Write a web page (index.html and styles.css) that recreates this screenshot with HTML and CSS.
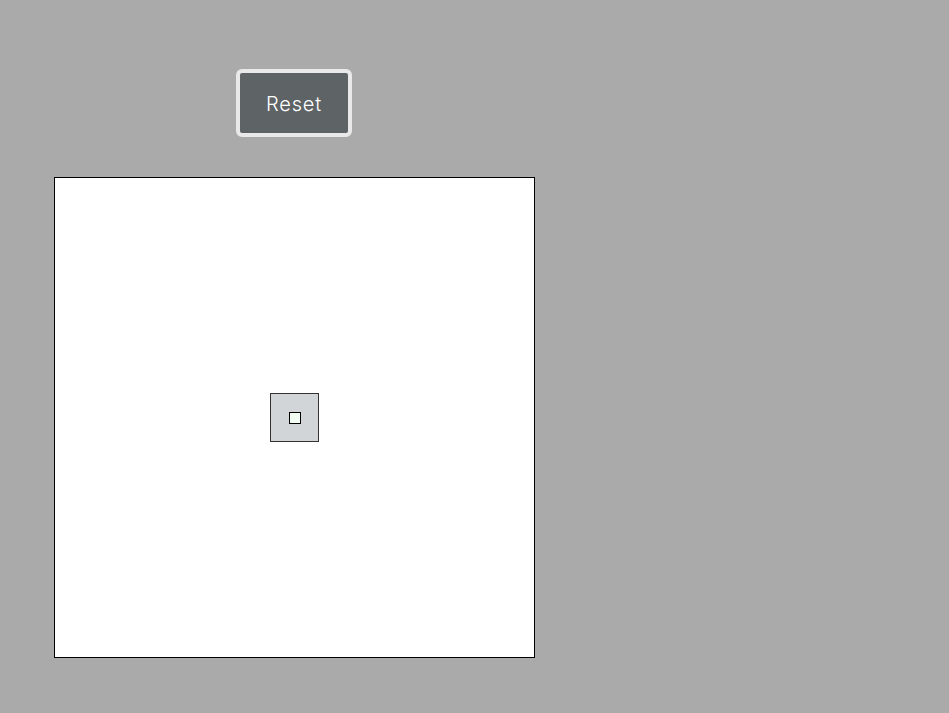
FILE: index.html
```html
<!DOCTYPE html>
<html>
<head>
<meta charset="utf-8">
<link rel="stylesheet" href="styles.css">
</head>
<body>
<div class="stage">
  <button class="reset">Reset</button>
  <div class="canvas">
    <div class="box"><div class="dot"></div></div>
  </div>
</div>
</body>
</html>
```
FILE: styles.css
```css
html, body { margin: 0; padding: 0; }
body {
  background: #aaaaaa;
  font-family: Inter, "Open Sans", sans-serif;
  width: 949px;
  height: 713px;
  overflow: hidden;
}
.stage {
  display: flex;
  flex-direction: column;
  align-items: center;
  width: 481px;
  padding: 69px 0 0 54px;
  gap: 40px;
}
.reset {
  box-sizing: border-box;
  width: 116px;
  height: 68px;
  margin-right: 1px;
  background: #5e6366;
  border: 4px solid #e9e9e9;
  border-radius: 6px;
  color: #ffffff;
  font-family: Inter, sans-serif;
  font-size: 20px;
  font-weight: 300;
  letter-spacing: 0.8px;
  padding: 2px 0 0 0;
}
.canvas {
  box-sizing: border-box;
  width: 481px;
  height: 481px;
  background: #ffffff;
  border: 1px solid #000000;
  display: flex;
  align-items: center;
  justify-content: center;
}
.box {
  box-sizing: border-box;
  width: 49px;
  height: 49px;
  background: #d1d5d7;
  border: 1px solid #333333;
  display: flex;
  align-items: center;
  justify-content: center;
}
.dot {
  box-sizing: border-box;
  width: 12px;
  height: 12px;
  background: #f2fff2;
  border: 1px solid #000000;
}
```
